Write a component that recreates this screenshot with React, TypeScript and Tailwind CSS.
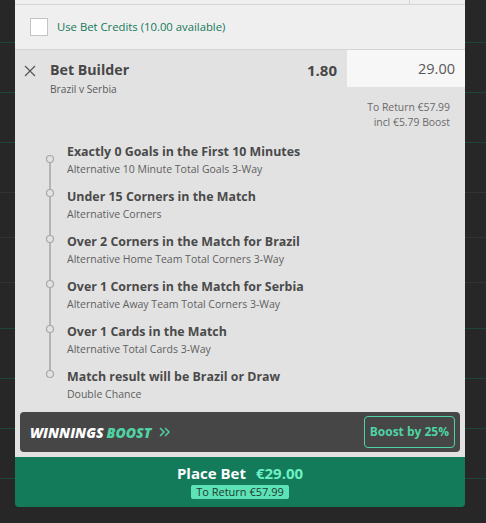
import React from 'react';

const legs = [
  { title: 'Exactly 0 Goals in the First 10 Minutes', market: 'Alternative 10 Minute Total Goals 3-Way' },
  { title: 'Under 15 Corners in the Match', market: 'Alternative Corners' },
  { title: 'Over 2 Corners in the Match for Brazil', market: 'Alternative Home Team Total Corners 3-Way' },
  { title: 'Over 1 Corners in the Match for Serbia', market: 'Alternative Away Team Total Corners 3-Way' },
  { title: 'Over 1 Cards in the Match', market: 'Alternative Total Cards 3-Way' },
  { title: 'Match result will be Brazil or Draw', market: 'Double Chance' },
];

// rows of the page that sits behind the betslip
const BackgroundRows = () => (
  <div className="absolute inset-0 flex flex-col">
    <div className="h-[43px] border-b border-[#1b4536]" />
    <div className="h-[50px] border-b border-[#1b4536]" />
    <div className="h-[50px] border-b border-[#1b4536]" />
    <div className="h-[50px] border-b border-[#333333]" />
    <div className="h-[45px] border-b border-[#333333]" />
    <div className="h-[45px] border-b border-[#333333]" />
    <div className="h-[46px] border-b border-[#1b4536]" />
    <div className="h-[50px] border-b border-[#1b4536]" />
    <div className="h-[50px] border-b border-[#1b4536]" />
    <div className="h-[50px] border-b border-[#1b4536]" />
  </div>
);

const Timeline = () => (
  <svg width="12" height="240" viewBox="0 0 12 240" className="shrink-0">
    <line x1="6" y1="17" x2="6" y2="232" stroke="#a3a3a3" strokeWidth="1.5" />
    {[17, 51, 97, 142, 187, 232].map((cy) => (
      <circle key={cy} cx="6" cy={cy} r="3.5" fill="#e2e2e2" stroke="#a8a8a8" strokeWidth="1.2" />
    ))}
  </svg>
);

export default function App() {
  return (
    <div
      className="relative w-[486px] h-[523px] bg-[#272727] overflow-hidden"
      style={{ fontFamily: '"Open Sans", "Noto Sans", sans-serif' }}
    >
      <BackgroundRows />

      <div className="relative ml-[15px] w-[450px] flex flex-col rounded-b-[4px] overflow-hidden">
        {/* top strip */}
        <div className="flex h-[5px] bg-[#efefef] border-b border-[#d6d6d6]">
          <div className="w-[395px] border-r border-[#d6d6d6]" />
        </div>

        {/* bet credits */}
        <div className="flex items-center h-[45px] bg-[#efefef] border-b border-[#d4d4d4] pl-[15px]">
          <div className="w-[18px] h-[18px] bg-white border border-[#c4c4c4]" />
          <span className="ml-[9px] text-[11.3px] text-[#15795b]">Use Bet Credits (10.00 available)</span>
        </div>

        {/* bet builder */}
        <div className="bg-[#e2e2e2] flex flex-col">
          <div className="flex">
            <div className="flex-1 flex pt-[10px]">
              <svg width="12" height="12" viewBox="0 0 12 12" className="ml-[9px] mt-[5px] shrink-0">
                <path d="M1 1 L11 11 M11 1 L1 11" stroke="#555" strokeWidth="1.2" />
              </svg>
              <div className="ml-[14px] flex-1 flex flex-col">
                <div className="flex justify-between items-center pr-[10px]">
                  <span className="text-[14.2px] font-bold text-[#474747] leading-[20px]">Bet Builder</span>
                  <span className="text-[15px] font-bold text-[#474747] leading-[20px]">1.80</span>
                </div>
                <span className="text-[10.2px] text-[#5a5a5a] leading-[16px] mt-[1px]">Brazil v Serbia</span>
              </div>
            </div>
            <div className="w-[118px] h-[37px] bg-[#f7f7f7] flex items-center justify-end pr-[10px] text-[14.5px] text-[#575757]">
              29.00
            </div>
          </div>

          <div className="flex flex-col items-end pr-[15px] mt-[3px] text-[10.4px] leading-[15px] text-[#6a6a6a]">
            <span>To Return €57.99</span>
            <span>incl €5.79 Boost</span>
          </div>

          <div className="flex pl-[29px] mt-[12px]">
            <Timeline />
            <div className="ml-[11px] flex flex-col">
              {legs.map((leg) => (
                <div key={leg.title} className="h-[45px] flex flex-col">
                  <span className="text-[12.4px] font-bold text-[#4a4a4a] leading-[20px]">{leg.title}</span>
                  <span className="text-[10.5px] text-[#5f5f5f] leading-[15px]">{leg.market}</span>
                </div>
              ))}
            </div>
          </div>

          {/* winnings boost */}
          <div className="mx-[5px] mb-[5px] h-[40px] rounded-[4px] bg-[#464646] flex items-center justify-between pl-[10px] pr-[5px]">
            <div className="flex items-center text-[14px] font-extrabold italic">
              <span className="text-white">WINNINGS</span>
              <span className="ml-[3px] text-[#4fd3a4]">BOOST</span>
              <svg width="14" height="12" viewBox="0 0 14 12" className="ml-[6px]">
                <path d="M2 2 L6 6 L2 10 M7 2 L11 6 L7 10" stroke="#4fd3a4" strokeWidth="1.5" fill="none" />
              </svg>
            </div>
            <div className="h-[32px] px-[5px] flex items-center rounded-[4px] border border-[#4fd3a4] text-[12px] font-bold text-[#4fd3a4]">
              Boost by 25%
            </div>
          </div>
        </div>

        {/* place bet */}
        <div className="h-[50px] bg-[#137a5a] flex flex-col items-center pt-[5px]">
          <div className="flex items-center text-[15px] font-bold leading-[22px]">
            <span className="text-white">Place Bet</span>
            <span className="ml-[10px] text-[#6ef0c4]">€29.00</span>
          </div>
          <span className="mt-[1px] px-[5px] rounded-[2px] bg-[#5de2b6] text-[11px] leading-[14px] text-[#1d3a31]">
            To Return €57.99
          </span>
        </div>
      </div>
    </div>
  );
}
